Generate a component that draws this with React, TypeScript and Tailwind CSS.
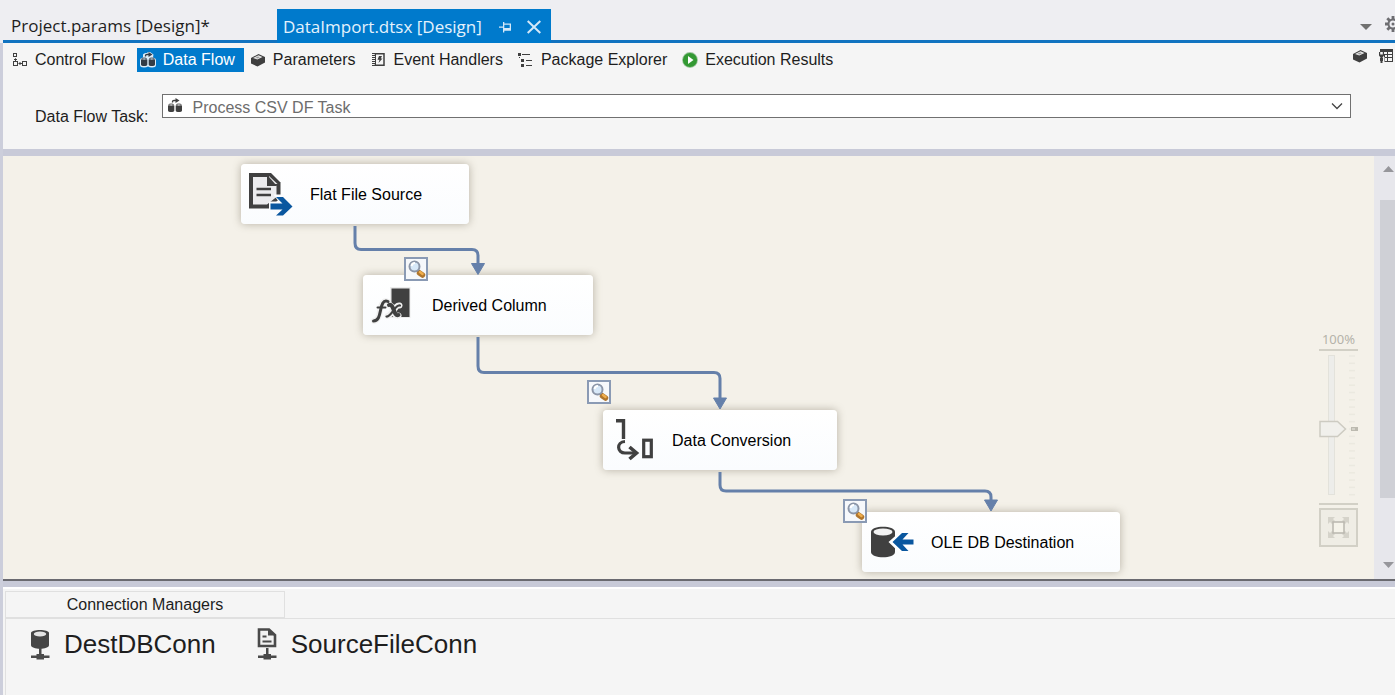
import { useState, type ReactNode } from "react";

const INK = "#3f3f3f";

/* ---------- small icons ---------- */

function ControlFlowIcon() {
  return (
    <svg width="16" height="16" viewBox="0 0 16 16" fill="none" stroke={INK} aria-hidden="true">
      <rect x="1.5" y="1.5" width="3" height="3" />
      <rect x="1.5" y="9.5" width="4" height="4" />
      <rect x="10.5" y="9.5" width="4" height="4" />
      <path d="M3.500 9V7M2 8l1.500-1.500L5 8M6.500 11.500h4M7.500 10l1.500 1.500-1.500 1.500" />
    </svg>
  );
}

function DataFlowIcon({ light = false }: { light?: boolean }) {
  const body = light ? "#333c46" : INK;
  const edge = light ? "#dcecf8" : "#ffffff";
  return (
    <svg width="16" height="16" viewBox="0 0 16 16" aria-hidden="true">
      {light && (
        <path
          d="M0 8.500Q0 6 3 5.500V2.500Q4 .5 7 1L8 0h2l3.500 2.500-.5 3q3 .5 3 3V13q0 2.500-4 2.500-2.500 0-4-1-1.500 1-4 1-4 0-4-2.500Z"
          fill={edge}
        />
      )}
      <path d="M5.500 4.500V3.500Q5.500 2.500 7 2.500h3" fill="none" stroke={body} strokeWidth="1.300" />
      <path d="M8.500 0 12.500 2.500 8.500 5Z" fill={body} />
      <path d="M1 7.500V12.500c0 2 6.300 2 6.300 0V7.500ZM8.700 7.500V12.500c0 2 6.300 2 6.300 0V7.500Z" fill={body} />
      <ellipse cx="4.150" cy="7" rx="2.600" ry="1" fill={edge} stroke={body} strokeWidth="0.900" />
      <ellipse cx="11.850" cy="7" rx="2.600" ry="1" fill={edge} stroke={body} strokeWidth="0.900" />
    </svg>
  );
}

function CubeIcon() {
  return (
    <svg width="16" height="16" viewBox="0 0 16 16" aria-hidden="true">
      <path d="M1 6 8.500 2 15 5v5.500L7.500 14.500 1 11.500Z" fill={INK} />
      <path d="M3 6 8.500 3.200 12.500 5 7.300 7.500Z" fill="#e6e6e6" />
      <path d="M5.500 5.800 8 4.600l1.800.6L7.300 6.500Z" fill="#9a9a9a" />
    </svg>
  );
}

function EventIcon() {
  return (
    <svg width="16" height="16" viewBox="0 0 16 16" aria-hidden="true">
      <path d="M3.500 1.700h9.500v11.600h-9.500" fill="none" stroke={INK} strokeWidth="1.500" />
      <path d="M2.500 1v13" stroke={INK} strokeWidth="3" strokeDasharray="1 1" />
      <path d="M4.500 1v13" stroke={INK} strokeWidth="1" />
      <path d="M8 4h3L9.800 6.500h1.700L7.500 11l1-3.300H6.500Z" fill={INK} />
    </svg>
  );
}

function ExplorerIcon() {
  return (
    <svg width="16" height="16" viewBox="0 0 16 16" fill={INK} aria-hidden="true">
      <path d="M0 1h3v3H0ZM3 7h3v3H3ZM3 12h3v3H3Z" />
      <path d="M4 2h8v1H4ZM8 8h6v1H8ZM8 13h6v1H8Z" />
      <path d="M1 5h1v1H1Z" />
    </svg>
  );
}

function PlayIcon() {
  return (
    <svg width="16" height="16" viewBox="0 0 16 16" aria-hidden="true">
      <circle cx="8" cy="8" r="7.900" fill="#9cc49c" />
      <circle cx="8" cy="8" r="7.100" fill="#339933" />
      <path d="M6 4v8l5.500-4Z" fill="#fff" />
    </svg>
  );
}

function VariablesGridIcon() {
  return (
    <svg width="16" height="16" viewBox="0 0 16 16" aria-hidden="true">
      <path d="M2 1h13v13H6v-1H2Z" fill={INK} />
      <path d="M6 4h3v2H6ZM10 4h4v2h-4ZM7 7h2v2H7ZM10 7h4v2h-4ZM7 10h2v3H7ZM10 10h4v3h-4Z" fill="#f5f5f5" />
      <path d="M0 4h6v6H0Z" fill="#f5f5f5" />
      <path d="M0 10h2v5H0ZM5 9h1.500v6H5Z" fill="#f5f5f5" />
      <path d="M1 4v3.500l1.500 2V15h2V9.500L6 7.500V4H4.800v2.500H2.200V4Z" fill={INK} />
    </svg>
  );
}

function GearIcon() {
  return (
    <svg width="16" height="16" viewBox="0 0 16 16" className="shrink-0" aria-hidden="true">
      <g stroke="#6e6e72" strokeWidth="2.800">
        <path d="M8 0v16M0 8h16M2.300 2.300l11.400 11.400M13.700 2.300 2.300 13.700" />
      </g>
      <circle cx="8" cy="8" r="5.500" fill="#6e6e72" />
      <circle cx="8" cy="8" r="3.500" fill="#eeeef2" />
      <circle cx="8" cy="8" r="1.500" fill="#6e6e72" />
    </svg>
  );
}

function PinIcon() {
  return (
    <svg width="12" height="12" viewBox="0 0 12 12" fill="#d4e8f8" aria-hidden="true">
      <path d="M0 5.500h4v1.300H0ZM4 1h1.300v10.500H4ZM5 2.500h7V9.500H5V7.300h5.700V3.800H5Z" />
      <path d="M5 7h7v2.500H5Z" />
    </svg>
  );
}

/* ---------- task icons ---------- */

function FlatFileIcon() {
  return (
    <svg width="44" height="44" viewBox="0 0 44 44" aria-hidden="true">
      <path d="M0 1h22l9.500 9.500V26L20 36.500H0Z" fill="#404040" />
      <path d="M4 5h14.500v8.500H27.500V25L18 32.500H4Z" fill="#ececee" />
      <path d="M20 4v8h8.500Z" fill="#ececee" />
      <path d="M18 5v9h10L20 5Z" fill="#404040" />
      <path d="M7.500 17h14.500M7.500 23h14.500" stroke="#404040" strokeWidth="2.600" />
      <path d="M20 29.500h9.500l-5-7h10l10.500 12L35 44H24l5-6h-9Z" fill="#fbfcfd" />
      <path d="M21.500 31.500H33.500L27 25h7l9.500 9.500L34 43.500h-7l6.500-6H21.500Z" fill="#0a579f" />
    </svg>
  );
}

function DerivedColumnIcon() {
  return (
    <svg width="44" height="44" viewBox="0 0 44 44" aria-hidden="true">
      <path d="M19 4h20.500v31H19Z" fill="#ececec" />
      <path d="M20.500 5.500h18v28.500h-18Z" fill="#404040" />
      <g fill="none" strokeLinecap="round">
        <g stroke="#f0f0f0" strokeWidth="6">
          <path d="M17 19q-6-3-8 9-1 9-6 10M17.500 22c5-2 4 13 10 10.500M28.500 22.500c-4-1-9 11-12 10.500" />
        </g>
        <g stroke="#404040">
          <path d="M17 18.500c-5-2.500-6.500 4-7.500 9s-2 10.500-7 10.500" strokeWidth="3" />
          <path d="M6.500 24.500h8" strokeWidth="2" />
          <path d="M18 22c5-2 4.500 12 9.500 10" strokeWidth="4" />
          <path d="M29 22.500c-5-1.500-8.500 12-13.500 11" strokeWidth="2.200" />
        </g>
      </g>
    </svg>
  );
}

function DataConversionIcon() {
  return (
    <svg width="44" height="44" viewBox="0 0 44 44" fill="none" stroke="#404040" aria-hidden="true">
      <path d="M5 2.700h7.500V21" strokeWidth="3.400" />
      <path d="M14 23.500C5 24 6 35 14 35h10" strokeWidth="3.200" />
      <path d="M18.500 29 25.500 35 18.500 41" strokeWidth="3.600" />
      <rect x="32.700" y="22.200" width="7.600" height="16.500" strokeWidth="3.200" />
    </svg>
  );
}

function OleDbIcon() {
  return (
    <svg width="44" height="44" viewBox="0 0 44 44" aria-hidden="true">
      <path d="M1 12C1 5 25 5 25 12v20c0 7-24 7-24 0Z" fill="#404040" />
      <ellipse cx="13" cy="12" rx="9.500" ry="3.400" fill="#f2f2f2" />
      <path d="M18.500 22 31 11h10l-5 7h9v9h-9l4 7h-9Z" fill="#fff" />
      <path d="M22.500 22 32 13h6.500L32.500 19.500H43.500v5H32.500L38.500 31H32Z" fill="#0a579f" />
    </svg>
  );
}

function MagnifierIcon() {
  return (
    <svg width="20" height="20" viewBox="0 0 20 20" aria-hidden="true">
      <path d="m11.500 11 2 2" stroke="#555" strokeWidth="3" />
      <path d="m13.500 14 3 2" stroke="#b0752c" strokeWidth="5.500" strokeLinecap="round" />
      <path d="m14 13 2.500 2" stroke="#efae4c" strokeWidth="2.500" strokeLinecap="round" />
      <circle cx="8.500" cy="7.500" r="5" fill="#d7e8f8" stroke="#8c96a8" strokeWidth="2" />
      <path d="M5.500 7A3.500 3.500 0 0 1 9 4" fill="none" stroke="#fff" strokeWidth="2" />
    </svg>
  );
}

/* ---------- connection icons ---------- */

function Network() {
  return <path d="M9 20h2.500v6H14v1.500h5.500v2.500H14V31.500H6.500V30H1v-2.500h5.500V26H9Z" fill="#4a4a4a" />;
}

function DbConnIcon() {
  return (
    <svg width="20" height="32" viewBox="0 0 20 32" aria-hidden="true">
      <path d="M1 5c0-4 18-4 18 0v12c0 5-18 5-18 0Z" fill="#454545" />
      <ellipse cx="10" cy="6" rx="6.200" ry="2.600" fill="#e4e4e4" />
      <Network />
    </svg>
  );
}

function FileConnIcon() {
  return (
    <svg width="20" height="32" viewBox="0 0 20 32" aria-hidden="true">
      <path d="M2 1.500h10L18 7v11H2Z" fill="#f2f2f2" stroke="#4a4a4a" strokeWidth="2.600" />
      <path d="M11 1v6.500h7Z" fill="#4a4a4a" />
      <path d="M5.500 8.500h4M5.500 13.500h9" stroke="#4a4a4a" strokeWidth="2" />
      <Network />
    </svg>
  );
}

/* ---------- data ---------- */

const views: { name: string; icon: ReactNode }[] = [
  { name: "Control Flow", icon: <ControlFlowIcon /> },
  { name: "Data Flow", icon: <DataFlowIcon light /> },
  { name: "Parameters", icon: <CubeIcon /> },
  { name: "Event Handlers", icon: <EventIcon /> },
  { name: "Package Explorer", icon: <ExplorerIcon /> },
  { name: "Execution Results", icon: <PlayIcon /> },
];

const nodes: { name: string; place: string; icon: ReactNode }[] = [
  { name: "Flat File Source", place: "left-[238px] top-[8px] w-[228px]", icon: <FlatFileIcon /> },
  { name: "Derived Column", place: "left-[360px] top-[119px] w-[230px]", icon: <DerivedColumnIcon /> },
  { name: "Data Conversion", place: "left-[600px] top-[254px] w-[234px]", icon: <DataConversionIcon /> },
  { name: "OLE DB Destination", place: "left-[859px] top-[356px] w-[258px]", icon: <OleDbIcon /> },
];

const viewers = ["left-[401px] top-[101px]", "left-[584px] top-[224px]", "left-[840px] top-[343px]"];

const ticks = Array.from({ length: 20 }, (_, i) => 5 + i * 7.3);

/* ---------- parts ---------- */

function DocumentTabs() {
  return (
    <div className="flex h-[43px] items-end bg-[#eeeef2] pl-[3px] font-['Open_Sans','Noto_Sans',sans-serif] text-[17px]">
      <div className="flex h-[34px] min-w-0 flex-1 border-b-[3px] border-[#1173c0]">
        <button type="button" className="w-[274px] shrink-0 pt-[2px] pl-2 text-left text-[#1e1e1e]">
          Project.params [Design]*
        </button>
        <div className="-mb-[3px] flex shrink-0 items-center bg-[#007acc] pt-[2px] pr-[10px] pl-[6px] text-[#e4f2fc]">
          <button type="button" className="w-[206px] text-left whitespace-nowrap">
            DataImport.dtsx [Design]
          </button>
          <button type="button" aria-label="Pin tab" className="ml-[10px]">
            <PinIcon />
          </button>
          <button type="button" aria-label="Close tab" className="ml-4">
            <svg width="14" height="14" viewBox="0 0 14 14" stroke="#d4e8f8" strokeWidth="2" aria-hidden="true">
              <path d="m.7 1 12.600 12M13.300 1 .7 13" />
            </svg>
          </button>
        </div>
        <div className="ml-auto flex items-center gap-[13px] overflow-hidden pt-1">
          <button type="button" aria-label="Open documents">
            <svg width="12" height="6" viewBox="0 0 12 6" fill="#717171" aria-hidden="true">
              <path d="M0 0h12L6 6Z" />
            </svg>
          </button>
          <button type="button" aria-label="Options" className="-mr-[6px] pb-[6px]">
            <GearIcon />
          </button>
        </div>
      </div>
    </div>
  );
}

function ZoomControl() {
  const [zoom, setZoom] = useState(100);
  return (
    <div className="absolute right-4 bottom-8 flex w-[39px] flex-col">
      <label
        htmlFor="zoom"
        className="border-b-2 border-[#d2d0c6] pb-[1px] text-center font-['Noto_Sans','Open_Sans',sans-serif] text-[13px] leading-[17px] text-[#b5b3aa]"
      >
        {zoom}%
      </label>
      <div className="relative h-[154px] border-b-2 border-[#d2d0c6]">
        <svg width="39" height="150" viewBox="0 0 39 150" aria-hidden="true">
          <rect x="9.500" y="4.500" width="6" height="139" fill="#ededea" stroke="#e3e2db" />
          {ticks.map((y) => (
            <path key={y} d={`M30 ${y}h6`} stroke="#ebe9e0" strokeWidth="1.500" />
          ))}
          <path d="M32 76h7v4h-7Z" fill="#bcbab0" />
          <path d="M33 78h3" stroke="#eceae2" />
          <path
            d="M1 70.500h17.500l8 7.500-8 7.500H1Z"
            transform={`translate(0 ${(100 - zoom) * 0.6})`}
            fill="#f1f0ec"
            stroke="#cdcbc2"
            strokeWidth="1.500"
          />
        </svg>
        <input
          id="zoom"
          type="range"
          min={0}
          max={200}
          value={zoom}
          onChange={(e) => setZoom(Number(e.target.value))}
          className="absolute inset-0 h-full w-full cursor-pointer opacity-0 [direction:rtl] [writing-mode:vertical-lr]"
        />
      </div>
      <button
        type="button"
        aria-label="Zoom to fit"
        className="mt-[3px] flex h-[39px] items-center justify-center border-2 border-[#d2d0c6] bg-[#efede5]"
      >
        <svg width="21" height="21" viewBox="0 0 21 21" aria-hidden="true">
          <path
            d="M0 0h7L5 2l2 2-3 3-2-2-2 2ZM21 0h-7l2 2-2 2 3 3 2-2 2 2ZM0 21h7l-2-2 2-2-3-3-2 2-2-2ZM21 21h-7l2-2-2-2 3-3 2 2 2-2Z"
            fill="#d5d3ca"
          />
          <rect x="5" y="5" width="11" height="11" fill="#f5f3ea" stroke="#b9b7ae" strokeWidth="1.500" />
        </svg>
      </button>
    </div>
  );
}

function Canvas() {
  return (
    <main className="relative min-h-[423px] min-w-0 flex-1 overflow-hidden bg-[#f4f1e9]">
      {nodes.map((n) => (
        <button
          key={n.name}
          type="button"
          className={`absolute flex h-[60px] items-center gap-[17px] rounded-[4px] bg-linear-to-b from-white to-[#fafcfe] pl-2 text-left text-black shadow-[0_0_8px_rgba(90,80,60,0.4)] ${n.place}`}
        >
          {n.icon}
          <span className="pt-[2px] whitespace-nowrap">{n.name}</span>
        </button>
      ))}
      <svg
        width="1120"
        height="423"
        viewBox="0 0 1120 423"
        className="pointer-events-none absolute top-0 left-0"
        aria-hidden="true"
      >
        <g fill="none" stroke="#6580aa" strokeWidth="3">
          <path d="M352 70V87q0 6.500 6 6.500H469q6 0 6 6V109" />
          <path d="M475 181V210q0 6.500 6 6.500H711q6 0 6 6V244" />
          <path d="M717 316V329q0 6 6 6H982q6 0 6 6V346" />
        </g>
        <g fill="#6580aa" stroke="#6580aa" strokeLinejoin="round">
          <path d="M468.500 107.500h13L475 118.500Z" />
          <path d="M710.500 242h13L717 253Z" />
          <path d="M981.500 344h13L988 355Z" />
        </g>
      </svg>
      {viewers.map((place) => (
        <button
          key={place}
          type="button"
          aria-label="Data viewer"
          className={`absolute flex h-6 w-6 items-center justify-center border-2 border-[#8a9ab4] bg-[#f6f8fb] ${place}`}
        >
          <MagnifierIcon />
        </button>
      ))}
      <ZoomControl />
    </main>
  );
}

function ScrollBar() {
  return (
    <div className="flex w-[21px] shrink-0 flex-col items-end bg-[#e7e7ec] py-[10px]">
      <svg width="13" height="7" viewBox="0 0 13 7" className="h-[7px]" fill="#96969b" aria-hidden="true">
        <path d="M1 6h11L6.500 0Z" />
      </svg>
      <div className="mt-[27px] h-[298px] w-[15px] bg-[#cfd0d6]" />
      <svg width="13" height="7" viewBox="0 0 13 7" className="mt-auto h-[7px]" fill="#96969b" aria-hidden="true">
        <path d="M1 0h11L6.500 6Z" />
      </svg>
    </div>
  );
}

export default function App() {
  const [view, setView] = useState("Data Flow");
  return (
    <div className="flex min-h-screen flex-col bg-[#f5f5f5] font-['Liberation_Sans',Arial,sans-serif] text-[16px] leading-5 text-[#1e1e1e]">
      <DocumentTabs />
      <div className="flex flex-1 flex-col border-l-[3px] border-[#cccedb]">
        <nav className="flex h-[34px] items-center gap-[3px] pl-[6px]">
          {views.map((v) => (
            <button
              key={v.name}
              type="button"
              onClick={() => setView(v.name)}
              className={`flex h-6 shrink-0 items-center gap-[7px] pr-[9px] pl-[3px] whitespace-nowrap ${
                v.name === view ? "bg-[#007acc] text-white" : ""
              }`}
            >
              {v.icon}
              {v.name}
            </button>
          ))}
          <div className="ml-auto flex items-center gap-[10px] pr-[1px] pb-2">
            <button type="button" aria-label="Variables">
              <CubeIcon />
            </button>
            <button type="button" aria-label="Parameter grid">
              <VariablesGridIcon />
            </button>
          </div>
        </nav>

        <div className="flex h-[72px] items-start gap-[13px] pt-[17px] pr-11 pl-8">
          <label htmlFor="task" className="shrink-0 pt-[13px]">
            Data Flow Task:
          </label>
          <div className="relative flex-1">
            <select
              id="task"
              className="block h-6 w-full appearance-none border border-[#707070] bg-white pt-[3px] pl-[30px] text-[16px] leading-5 text-[#6d6d6d]"
            >
              <option>Process CSV DF Task</option>
            </select>
            <span className="pointer-events-none absolute top-1 left-[5px]">
              <DataFlowIcon />
            </span>
            <svg
              width="12"
              height="8"
              viewBox="0 0 12 8"
              className="pointer-events-none absolute top-2 right-2"
              fill="none"
              stroke="#444"
              strokeWidth="1.300"
              aria-hidden="true"
            >
              <path d="m1 1.500 5 5 5-5" />
            </svg>
          </div>
        </div>

        <div className="h-[7px] bg-[#c8cad8]" />

        <div className="flex flex-1">
          <Canvas />
          <ScrollBar />
        </div>

        <div className="h-[10px] border-t-2 border-b-2 border-t-[#6a6a70] border-b-white bg-[#c8cad8]" />

        <section className="h-[106px] pt-[2px] pl-[2px]">
          <h2 className="flex h-[27px] w-[280px] items-center justify-center border border-[#e0e0e0] font-normal">
            Connection Managers
          </h2>
          <div className="flex h-[77px] items-start gap-[41px] border-t border-l border-[#e0e0e0] pt-[9px] pl-6 text-[26px] leading-8">
            <button type="button" className="flex items-center gap-[14px]">
              <DbConnIcon />
              DestDBConn
            </button>
            <button type="button" className="flex items-center gap-[14px]">
              <FileConnIcon />
              SourceFileConn
            </button>
          </div>
        </section>
      </div>
    </div>
  );
}
